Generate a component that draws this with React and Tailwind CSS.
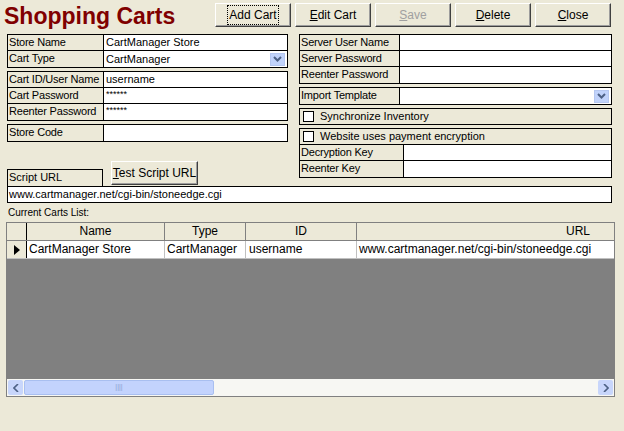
import React from 'react';

const F = { fontFamily: '"Liberation Sans", Arial, sans-serif' };

const Btn = ({ children, className = '', disabled }) => (
  <div className={`h-[24px] flex items-center justify-center bg-[#ECE9D8] border border-t-white border-l-white border-r-[#404040] border-b-[#404040] shadow-[inset_-1px_-1px_0_#9d9d9d] text-[12px] ${disabled ? 'text-[#a0a0a0]' : 'text-black'} ${className}`}>
    {children}
  </div>
);

const Row = ({ label, value, lw = 'w-[96px]', drop, last, small }) => (
  <div className={`flex h-[16px] ${last ? 'h-[15px]' : 'border-b border-black'}`}>
    <div className={`${lw} shrink-0 border-r border-black px-[1px] text-[11px] tracking-[-0.2px] leading-[15px] whitespace-nowrap overflow-hidden`}>{label}</div>
    <div className={`flex-1 bg-white flex items-center px-[2px] ${small ? 'text-[9px] leading-[10px] items-start pt-[1px]' : 'text-[11px]'}`}>
      <span className="flex-1">{value}</span>
      {drop && <Drop />}
    </div>
  </div>
);

const Drop = () => (
  <div className="w-[15px] h-[13px] bg-[#c1d3fb] border border-[#b5c7f0] flex items-center justify-center">
    <svg width="9" height="6" viewBox="0 0 9 6"><path d="M1 1l3.5 3.5L8 1" stroke="#4d6185" strokeWidth="2" fill="none" /></svg>
  </div>
);

const Box = ({ children, className = '' }) => <div className={`border border-black ${className}`}>{children}</div>;

const Check = ({ label }) => (
  <div className="flex items-center h-[15px] text-[11px] px-[3px] gap-[6px]">
    <div className="w-[11px] h-[11px] border border-black bg-white" />
    {label}
  </div>
);

export default function App() {
  return (
    <div style={F} className="w-[624px] h-[431px] bg-[#ECE9D8] relative overflow-hidden text-black">
      <div className="flex items-start pt-[3px]">
        <div className="pl-[4px] w-[215px] text-[23px] leading-[26px] font-bold text-[#800000]">Shopping Carts</div>
        <div className="flex gap-[4px]">
          <Btn className="w-[76px]"><span className="border border-dotted border-black px-[1px]">Add Cart</span></Btn>
          <Btn className="w-[76px]"><span><u>E</u>dit Cart</span></Btn>
          <Btn className="w-[76px]" disabled><span><u>S</u>ave</span></Btn>
          <Btn className="w-[76px]"><span><u>D</u>elete</span></Btn>
          <Btn className="w-[76px]"><span><u>C</u>lose</span></Btn>
        </div>
      </div>

      <div className="flex pl-[7px] pt-[5px] gap-[11px]">
        <div className="w-[281px] flex flex-col gap-[3px]">
          <Box>
            <Row label="Store Name" value="CartManager Store" />
            <Row label="Cart Type" value="CartManager" drop last />
          </Box>
          <Box>
            <Row label="Cart ID/User Name" value="username" />
            <Row label="Cart Password" value="******" small />
            <Row label="Reenter Password" value="******" small last />
          </Box>
          <Box>
            <Row label="Store Code" value="" last />
          </Box>
          <div className="flex items-end mt-[16px] gap-[8px]">
            <Box className="w-[96px] h-[17px] border-b-0 text-[11px] leading-[15px] px-[1px]">Script URL</Box>
            <Btn className="w-[87px] h-[21px] mb-[1px]"><span><u>T</u>est Script URL</span></Btn>
          </div>
        </div>
        <div className="w-[313px] flex flex-col gap-[3px]">
          <Box>
            <Row label="Server User Name" value="" lw="w-[100px]" />
            <Row label="Server Password" value="" lw="w-[100px]" />
            <Row label="Reenter Password" value="" lw="w-[100px]" last />
          </Box>
          <Box>
            <Row label="Import Template" value="" lw="w-[100px]" drop last />
          </Box>
          <Box className="bg-[#ECE9D8]"><Check label="Synchronize Inventory" /></Box>
          <Box>
            <div className="border-b border-black"><Check label="Website uses payment encryption" /></div>
            <Row label="Decryption Key" value="" lw="w-[104px]" />
            <Row label="Reenter Key" value="" lw="w-[104px]" last />
          </Box>
        </div>
      </div>

      <div className="mx-[7px] mt-[0px] w-[605px] h-[17px] bg-white border border-black text-[11px] leading-[15px] px-[1px]">www.cartmanager.net/cgi-bin/stoneedge.cgi</div>

      <div className="pl-[8px] pt-[4px] text-[10px] leading-[12px]">Current Carts List:</div>
      <div className="ml-[6px] mt-[3px] w-[609px] h-[175px] border border-[#808080] flex flex-col bg-[#808080]">
        <div className="flex h-[18px] bg-[#ECE9D8] text-[12px] leading-[17px] border-b border-[#808080]">
          <div className="w-[20px] border-r border-black" />
          <div className="w-[138px] border-r border-[#808080] text-center">Name</div>
          <div className="w-[81px] border-r border-[#808080] text-center">Type</div>
          <div className="w-[111px] border-r border-[#808080] text-center">ID</div>
          <div className="flex-1 text-right pr-[24px]">URL</div>
        </div>
        <div className="flex h-[18px] bg-white text-[12px] leading-[17px] border-b border-[#c0c0c0] whitespace-nowrap overflow-hidden">
          <div className="w-[20px] bg-[#ECE9D8] border-r border-black flex items-center justify-center">
            <svg width="6" height="10"><path d="M0 0l6 5-6 5z" fill="#000" /></svg>
          </div>
          <div className="w-[138px] border-r border-[#c0c0c0] px-[2px]">CartManager Store</div>
          <div className="w-[81px] border-r border-[#c0c0c0] px-[2px]">CartManager</div>
          <div className="w-[111px] border-r border-[#c0c0c0] px-[3px]">username</div>
          <div className="flex-1 px-[2px]">www.cartmanager.net/cgi-bin/stoneedge.cgi</div>
        </div>
        <div className="flex-1" />
        <div className="h-[17px] bg-[#f7f7f3] flex items-center px-[1px] gap-[1px]">
          <div className="w-[15px] h-[15px] bg-[#c8d6fb] rounded-[2px] flex items-center justify-center">
            <svg width="6" height="8"><path d="M5 0L1 4l4 4" stroke="#4d6185" strokeWidth="1.6" fill="none" /></svg>
          </div>
          <div className="w-[190px] h-[15px] bg-[#c3d3fd] border border-[#a9bff0] rounded-[2px] flex items-center justify-center text-[7px] text-[#8aa0d0]">||||</div>
          <div className="flex-1" />
          <div className="w-[15px] h-[15px] bg-[#c8d6fb] rounded-[2px] flex items-center justify-center">
            <svg width="6" height="8"><path d="M1 0l4 4-4 4" stroke="#4d6185" strokeWidth="1.6" fill="none" /></svg>
          </div>
        </div>
      </div>
    </div>
  );
}
